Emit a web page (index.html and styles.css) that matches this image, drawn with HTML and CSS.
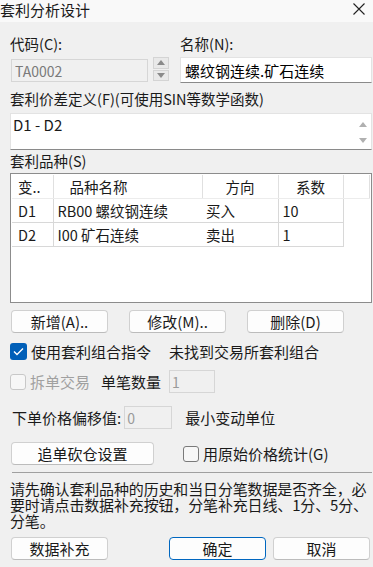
FILE: index.html
```html
<!DOCTYPE html>
<html lang="zh-CN">
<head>
    <meta charset="UTF-8">
    <meta name="viewport" content="width=device-width, initial-scale=1.0">
    <title>套利分析设计</title>
    <link rel="stylesheet" href="styles.css">
</head>
<body>
    <div class="titlebar">
        <span class="title">套利分析设计</span>
        <svg class="close" width="14" height="14" viewBox="0 0 14 14">
            <path d="M1.5 1.5 L12.5 12.5 M12.5 1.5 L1.5 12.5" stroke="#222" stroke-width="1.1" fill="none"/>
        </svg>
    </div>

    <div class="content">
        <div class="fields">
            <label class="lbl">代码(C):</label>
            <label class="lbl">名称(N):</label>
            <div class="code-wrap">
                <input class="code" type="text" value="TA0002" disabled>
                <div class="spin">
                    <span class="spin-btn"><svg width="8" height="5" viewBox="0 0 8 5"><path d="M0 5 L4 0 L8 5 Z" fill="#8a8a8a"/></svg></span>
                    <span class="spin-btn"><svg width="8" height="5" viewBox="0 0 8 5"><path d="M0 0 L4 5 L8 0 Z" fill="#8a8a8a"/></svg></span>
                </div>
            </div>
            <input class="name" type="text" value="螺纹钢连续.矿石连续">
        </div>

        <div class="lbl formula-lbl">套利价差定义(F)(可使用SIN等数学函数)</div>
        <div class="formula">
            <span>D1 - D2</span>
            <div class="scroll">
                <svg width="8" height="5" viewBox="0 0 8 5"><path d="M0 5 L4 0 L8 5 Z" fill="#b0b0b0"/></svg>
                <svg width="8" height="5" viewBox="0 0 8 5"><path d="M0 0 L4 5 L8 0 Z" fill="#b0b0b0"/></svg>
            </div>
        </div>

        <div class="lbl list-lbl">套利品种(S)</div>
        <div class="list">
            <table>
                <colgroup>
                    <col style="width:41px">
                    <col style="width:149px">
                    <col style="width:76px">
                    <col style="width:65px">
                    <col>
                </colgroup>
                <thead>
                    <tr>
                        <th class="c-var">变..</th>
                        <th class="c-name">品种名称</th>
                        <th class="c-mid">方向</th>
                        <th class="c-mid">系数</th>
                        <th></th>
                    </tr>
                </thead>
                <tbody>
                    <tr>
                        <td class="c-var sep">D1</td>
                        <td class="c-data">RB00 螺纹钢连续</td>
                        <td class="c-data sep">买入</td>
                        <td class="c-data sep">10</td>
                        <td class="empty"></td>
                    </tr>
                    <tr>
                        <td class="c-var sep">D2</td>
                        <td class="c-data">I00 矿石连续</td>
                        <td class="c-data sep">卖出</td>
                        <td class="c-data sep">1</td>
                        <td class="empty"></td>
                    </tr>
                </tbody>
            </table>
        </div>

        <div class="btn-row">
            <button class="btn">新增(A)..</button>
            <button class="btn">修改(M)..</button>
            <button class="btn">删除(D)</button>
        </div>

        <div class="check-row">
            <span class="box checked">
                <svg width="11" height="9" viewBox="0 0 11 9"><path d="M1 4.5 L4 7.5 L10 1.5" stroke="#fff" stroke-width="1.4" fill="none"/></svg>
            </span>
            <span class="check-text">使用套利组合指令</span>
            <span class="note">未找到交易所套利组合</span>
        </div>

        <div class="split-row">
            <span class="box disabled"></span>
            <span class="check-text muted">拆单交易</span>
            <span class="qty-lbl">单笔数量</span>
            <input class="small-input qty" type="text" value="1" disabled>
        </div>

        <div class="offset-row">
            <span>下单价格偏移值:</span>
            <input class="small-input offset" type="text" value="0" disabled>
            <span class="unit">最小变动单位</span>
        </div>

        <div class="chase-row">
            <button class="btn chase">追单砍仓设置</button>
            <span class="box plain"></span>
            <span class="check-text">用原始价格统计(G)</span>
        </div>

        <div class="divider"></div>

        <p class="hint">请先确认套利品种的历史和当日分笔数据是否齐全，必<br>要时请点击数据补充按钮，分笔补充日线、1分、5分、<br>分笔。</p>

        <div class="footer">
            <button class="btn">数据补充</button>
            <button class="btn primary">确定</button>
            <button class="btn">取消</button>
        </div>
    </div>
</body>
</html>
```

FILE: styles.css
```css
body {
    margin: 0;
    width: 373px;
    height: 567px;
    overflow: hidden;
    background: #f0f0f0;
    font-family: "Noto Sans CJK SC", "Noto Sans", sans-serif;
    font-size: 15px;
    color: #1a1a1a;
}
.titlebar {
    height: 22px;
    background: #f9f9f9;
    display: flex;
    align-items: center;
    justify-content: space-between;
    padding: 0 7px 0 0;
}
.title {
    font-size: 15px;
    line-height: 20px;
    margin-top: -3px;
}
.close {
    margin-top: -4px;
}
.content {
    padding: 13px 1px 0 10px;
}
.lbl {
    display: block;
    height: 18px;
    line-height: 18px;
    font-size: 14.5px;
}
.fields {
    display: grid;
    grid-template-columns: 170px 1fr;
    grid-template-rows: 18px 26px;
    row-gap: 4px;
}
.code-wrap {
    display: flex;
    align-items: flex-start;
}
.code {
    box-sizing: border-box;
    width: 137px;
    height: 23px;
    margin: 2px 0 0 1px;
    padding: 0 3px;
    border: 1px solid #d6d6d6;
    background: #f0f0f0;
    color: #7a7a7a;
    font: inherit;
    font-size: 14px;
}
.spin {
    margin-left: 5px;
    width: 16px;
    height: 24px;
    display: flex;
    flex-direction: column;
    gap: 1px;
}
.spin-btn {
    flex: 1;
    display: flex;
    align-items: center;
    justify-content: center;
    background: #e9e9e9;
    border: 1px solid #d4d4d4;
}
.name {
    box-sizing: border-box;
    height: 26px;
    width: 192px;
    padding: 0 4px;
    border: 1px solid #e3e3e3;
    border-bottom: 1px solid #8a8a8a;
    background: #fff;
    color: #000;
    font: inherit;
    font-size: 15px;
}
.formula-lbl {
    margin-top: 7px;
}
.formula {
    box-sizing: border-box;
    margin-top: 5px;
    height: 37px;
    background: #fff;
    border: 1px solid #e3e3e3;
    border-bottom: 1px solid #8a8a8a;
    display: flex;
    justify-content: space-between;
    padding: 2px 0 0 2px;
    line-height: 18px;
}
.scroll {
    width: 16px;
    display: flex;
    flex-direction: column;
    justify-content: space-between;
    align-items: center;
    padding: 6px 0 6px;
}
.list-lbl {
    margin-top: 2px;
}
.list {
    box-sizing: border-box;
    margin-top: 3px;
    height: 130px;
    border: 1px solid #8c8c8c;
    background: #fff;
    padding: 1px;
}
table {
    width: 100%;
    table-layout: fixed;
    border-collapse: collapse;
    font-size: 14.5px;
}
th {
    height: 23px;
    padding: 0;
    font-weight: normal;
    border-right: 1px solid #e0e0e0;
    border-bottom: 1px solid #ececec;
}
td {
    height: 23px;
    padding: 0;
    border-bottom: 1px solid #d8d8d8;
    white-space: nowrap;
    overflow: hidden;
}
.c-var {
    text-align: left;
    padding-left: 6px;
}
.c-name {
    text-align: left;
    padding-left: 16px;
}
.c-mid {
    text-align: center;
}
.c-data {
    padding-left: 4px;
}
.sep {
    border-right: 1px solid #d8d8d8;
}
td.empty {
    border: none;
}
.btn {
    box-sizing: border-box;
    height: 23px;
    padding: 0;
    background: #fdfdfd;
    border: 1px solid #d0d0d0;
    border-bottom-color: #bcbcbc;
    border-radius: 4px;
    font: inherit;
    font-size: 15px;
    color: #1a1a1a;
    line-height: 20px;
}
.btn-row {
    margin-top: 7px;
    display: flex;
    gap: 21px;
    padding-left: 1px;
}
.btn-row .btn {
    width: 97px;
}
.check-row {
    margin-top: 10px;
    height: 17px;
    display: flex;
    align-items: center;
}
.box {
    box-sizing: border-box;
    width: 17px;
    height: 17px;
    border-radius: 3px;
    display: inline-flex;
    align-items: center;
    justify-content: center;
    flex: none;
}
.box.checked {
    background: #005fb8;
}
.box.disabled {
    width: 16px;
    height: 16px;
    border: 1px solid #c8c8c8;
    background: #f7f7f7;
}
.box.plain {
    width: 16px;
    height: 16px;
    border: 1px solid #7a7a7a;
    background: #f7f7f7;
}
.check-text {
    margin-left: 4px;
    line-height: 18px;
}
.muted {
    color: #a0a0a0;
}
.note {
    margin-left: 18px;
}
.split-row {
    margin-top: 10px;
    height: 23px;
    display: flex;
    align-items: center;
}
.qty-lbl {
    margin-left: 11px;
}
.small-input {
    box-sizing: border-box;
    height: 23px;
    padding: 0 2px;
    border: 1px solid #d6d6d6;
    background: #f0f0f0;
    color: #9a9a9a;
    font: inherit;
    font-size: 14px;
}
.qty {
    width: 46px;
    margin-left: 8px;
}
.offset-row {
    margin-top: 13px;
    height: 23px;
    display: flex;
    align-items: center;
    padding-left: 2px;
}
.offset {
    width: 48px;
    margin-left: 3px;
}
.unit {
    margin-left: 13px;
}
.chase-row {
    margin-top: 13px;
    height: 23px;
    display: flex;
    align-items: center;
    padding-left: 1px;
}
.chase {
    width: 143px;
    margin-right: 29px;
}
.divider {
    margin: 7px 0 0 2px;
    height: 1px;
    background: #a0a0a0;
}
.hint {
    margin: 8px 0 0;
    font-size: 15px;
    letter-spacing: -0.15px;
    line-height: 16px;
    white-space: nowrap;
}
.footer {
    margin-top: 8px;
    display: flex;
    padding-left: 1px;
}
.footer .btn {
    width: 97px;
}
.footer .primary {
    margin-left: 61px;
    border: 1px solid #0067c0;
}
.footer .primary + .btn {
    margin-left: 7px;
}
```
